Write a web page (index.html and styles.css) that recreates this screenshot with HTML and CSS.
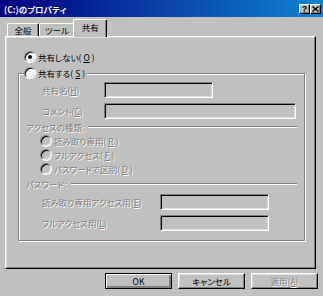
FILE: index.html
```html
<!DOCTYPE html>
<html lang="ja">
<head>
    <meta charset="UTF-8">
    <meta name="viewport" content="width=device-width, initial-scale=1.0">
    <title>(C:)のプロパティ</title>
    <link rel="stylesheet" href="styles.css">
</head>
<body>
    <div class="window">
        <div class="titlebar">
            <span class="title">(C:)のプロパティ</span>
            <div class="title-buttons">
                <button class="title-btn">?</button>
                <button class="title-btn">
                    <svg width="7" height="6" viewBox="0 0 7 6"><path d="M0.5 0.5L6.5 5.5M6.5 0.5L0.5 5.5" stroke="#000" stroke-width="1.4"/></svg>
                </button>
            </div>
        </div>

        <div class="client">
            <div class="tabs">
                <div class="tab">全般</div>
                <div class="tab">ツール</div>
                <div class="tab active">共有</div>
            </div>

            <div class="panel">
                <div class="option first"><span class="radio on"></span>共有しない(<u>O</u>)</div>

                <fieldset class="group">
                    <legend><span class="option"><span class="radio"></span>共有する(<u>S</u>)</span></legend>
                    <div class="group-body">
                        <div class="field-row">
                            <span class="label off">共有名(<u>H</u>)</span>
                            <input class="field" type="text" disabled>
                        </div>
                        <div class="field-row">
                            <span class="label off">コメント(<u>C</u>)</span>
                            <input class="field long" type="text" disabled>
                        </div>

                        <div class="section off">アクセスの種類:</div>
                        <div class="option sub off"><span class="radio dim"></span>読み取り専用(<u>R</u>)</div>
                        <div class="option sub off"><span class="radio dim"></span>フルアクセス(<u>F</u>)</div>
                        <div class="option sub off"><span class="radio dim"></span>パスワードで区別(<u>D</u>)</div>

                        <div class="section off">パスワード:</div>
                        <div class="field-row pw first-pw">
                            <span class="label off">読み取り専用アクセス用(<u>E</u>)</span>
                            <input class="field" type="text" disabled>
                        </div>
                        <div class="field-row pw">
                            <span class="label off">フルアクセス用(<u>L</u>)</span>
                            <input class="field" type="text" disabled>
                        </div>
                    </div>
                </fieldset>
            </div>

            <div class="actions">
                <button class="btn default">OK</button>
                <button class="btn">キャンセル</button>
                <button class="btn off">適用(<u>A</u>)</button>
            </div>
        </div>
    </div>
</body>
</html>
```

FILE: styles.css
```css
body {
    margin: 0;
    background-color: #c0c0c0;
    font-family: "Noto Sans CJK JP", sans-serif;
    font-size: 8.5px;
    line-height: 14px;
    font-feature-settings: "palt";
    color: #000;
}

.window {
    width: 323px;
    height: 296px;
}

.titlebar {
    height: 17px;
    box-sizing: border-box;
    padding: 0 2px 0 4px;
    display: flex;
    align-items: center;
    justify-content: space-between;
    background: linear-gradient(to right, #000080, #1084d0);
}

.title {
    color: white;
    font-weight: bold;
    font-size: 8.5px;
}

.title-buttons {
    display: flex;
}

.title-btn {
    width: 11px;
    height: 10px;
    padding: 0;
    box-sizing: border-box;
    display: flex;
    align-items: center;
    justify-content: center;
    background-color: #c0c0c0;
    border: 1px solid;
    border-color: #fff #000 #000 #fff;
    box-shadow: inset -1px -1px #808080;
    font: bold 9px/8px "Liberation Sans", sans-serif;
    color: #000;
}

.client {
    padding: 2px 7px 0 5px;
}

/* tabs */
.tabs {
    display: flex;
    align-items: flex-end;
    height: 17px;
    padding-left: 2px;
}

.tab {
    min-width: 32px;
    height: 13px;
    box-sizing: border-box;
    padding: 0 5px;
    text-align: center;
    line-height: 12px;
    border: 1px solid;
    border-bottom: 0;
    border-color: #fff #000 #000 #fff;
    border-radius: 2px 2px 0 0;
    box-shadow: inset -1px 0 #808080;
    background-color: #c0c0c0;
}

.tab.active {
    position: relative;
    z-index: 1;
    min-width: 34px;
    height: 18px;
    margin: 0 -2px -1px -2px;
    line-height: 15px;
}

.panel {
    height: 233px;
    box-sizing: border-box;
    padding: 13px 10px 0 12px;
    border: 1px solid;
    border-color: #fff #000 #000 #fff;
    box-shadow: inset -1px -1px #808080, inset 1px 1px #dfdfdf;
}

/* radios */
.option {
    display: flex;
    align-items: center;
    height: 14px;
    gap: 2px;
}

.option.first {
    padding-left: 6px;
}

.option.sub {
    margin-left: 14px;
}

.radio {
    width: 12px;
    height: 12px;
    box-sizing: border-box;
    border-radius: 50%;
    border: 1px solid;
    border-color: #808080 #fff #fff #808080;
    box-shadow: inset 1px 1px #000, inset -1px -1px #dfdfdf;
    background-color: #fff;
}

.radio.dim {
    background-color: #c0c0c0;
}

.radio.on::after {
    content: "";
    display: block;
    width: 4px;
    height: 4px;
    margin: 3px;
    border-radius: 50%;
    background-color: #000;
}

.off {
    color: #808080;
    text-shadow: 1px 1px 0 #fff;
}

/* group box */
.group {
    margin: 2px 0 0 0;
    padding: 0 0 9px 0;
    min-width: 0;
    border: 1px solid #808080;
    box-shadow: inset 1px 1px #fff, 1px 1px #fff;
}

.group legend {
    margin-left: 5px;
    padding: 0 2px 0 0;
    background-color: #c0c0c0;
}

.group-body {
    padding: 2px 7px 0 7px;
}

.field-row {
    display: flex;
    align-items: center;
    height: 16px;
    margin-left: 16px;
}

.field-row + .field-row {
    margin-top: 5px;
}

.field-row .label {
    width: 62px;
    flex-shrink: 0;
    white-space: nowrap;
}

.field-row.pw .label {
    width: 118px;
}

.field-row.first-pw {
    margin-top: 3px;
}

.field {
    width: 109px;
    height: 16px;
    box-sizing: border-box;
    margin: 0;
    padding: 0;
    border: 1px solid;
    border-color: #808080 #fff #fff #808080;
    box-shadow: inset 1px 1px #000, inset -1px -1px #dfdfdf;
    background-color: #c0c0c0;
}

.field.long {
    width: 192px;
}

.section {
    display: flex;
    align-items: center;
    height: 14px;
    margin-top: 1px;
}

.section::after {
    content: "";
    flex: 1;
    margin-left: 4px;
    border-top: 1px solid #808080;
    border-bottom: 1px solid #fff;
}

/* bottom buttons */
.actions {
    display: flex;
    justify-content: flex-end;
    gap: 6px;
    margin-top: 4px;
    margin-right: -2px;
}

.btn {
    width: 67px;
    height: 16px;
    padding: 0;
    box-sizing: border-box;
    font-family: "Noto Sans CJK JP", sans-serif;
    font-size: 8.5px;
    font-feature-settings: "palt";
    line-height: 12px;
    color: #000;
    background-color: #c0c0c0;
    border: 1px solid;
    border-color: #fff #000 #000 #fff;
    box-shadow: inset -1px -1px #808080, inset 1px 1px #dfdfdf;
}

.btn.default {
    border-color: #000;
    box-shadow: inset 1px 1px #fff, inset -2px -2px #808080;
}

.btn.off {
    color: #808080;
    text-shadow: 1px 1px 0 #fff;
}
```
